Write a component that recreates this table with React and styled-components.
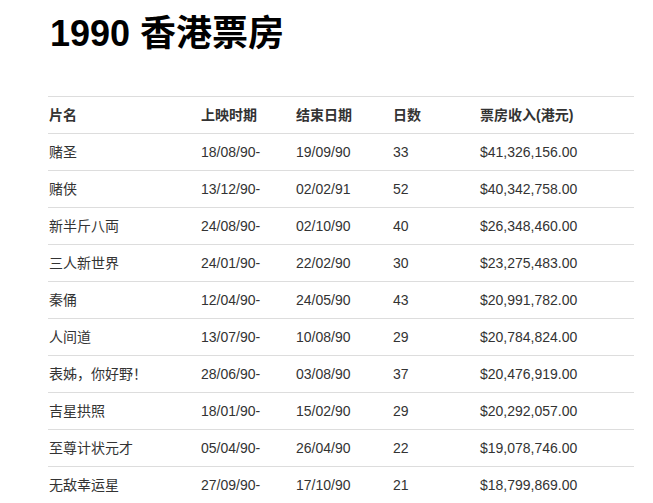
import React from "react";
import styled, { createGlobalStyle } from "styled-components";

const Global = createGlobalStyle`
  html, body { margin: 0; padding: 0; background: #fff; }
  body { font-family: "Liberation Sans", Arial, "Noto Sans CJK SC", sans-serif; color: #333; }
`;

const Page = styled.div`
  padding: 14px 0 0 48px;
`;

const Title = styled.h1`
  margin: 0 0 42px 2px;
  font-size: 36px;
  line-height: 40px;
  font-weight: 700;
  color: #000;
  font-family: "Liberation Sans", Arial, "Noto Sans CJK SC", sans-serif;
`;

const Table = styled.table`
  width: 586px;
  border-collapse: collapse;
  table-layout: fixed;
  font-size: 14px;
  border-top: 1px solid #ddd;
`;

const Th = styled.th`
  text-align: left;
  font-weight: 700;
  padding: 8px 1px;
  line-height: 20px;
  height: 36px;
  box-sizing: border-box;
  border-bottom: 1px solid #ddd;
  color: #333;
`;

const Td = styled.td`
  padding: 8px 1px;
  line-height: 20px;
  height: 37px;
  box-sizing: border-box;
  border-bottom: 1px solid #ddd;
  color: #333;
  white-space: nowrap;
`;

const widths = [152, 95, 97, 87, 155];
const headers = ["片名", "上映时期", "结束日期", "日数", "票房收入(港元)"];
const rows = [
  ["赌圣", "18/08/90-", "19/09/90", "33", "$41,326,156.00"],
  ["赌侠", "13/12/90-", "02/02/91", "52", "$40,342,758.00"],
  ["新半斤八両", "24/08/90-", "02/10/90", "40", "$26,348,460.00"],
  ["三人新世界", "24/01/90-", "22/02/90", "30", "$23,275,483.00"],
  ["秦俑", "12/04/90-", "24/05/90", "43", "$20,991,782.00"],
  ["人间道", "13/07/90-", "10/08/90", "29", "$20,784,824.00"],
  ["表姊，你好野！", "28/06/90-", "03/08/90", "37", "$20,476,919.00"],
  ["吉星拱照", "18/01/90-", "15/02/90", "29", "$20,292,057.00"],
  ["至尊计状元才", "05/04/90-", "26/04/90", "22", "$19,078,746.00"],
  ["无敌幸运星", "27/09/90-", "17/10/90", "21", "$18,799,869.00"],
];

export default function App() {
  return (
    <Page>
      <Global />
      <Title>1990 香港票房</Title>
      <Table>
        <colgroup>
          {widths.map((w, i) => (
            <col key={i} style={{ width: w }} />
          ))}
        </colgroup>
        <thead>
          <tr>
            {headers.map((h) => (
              <Th key={h}>{h}</Th>
            ))}
          </tr>
        </thead>
        <tbody>
          {rows.map((r, i) => (
            <tr key={i}>
              {r.map((c, j) => (
                <Td key={j}>{c}</Td>
              ))}
            </tr>
          ))}
        </tbody>
      </Table>
    </Page>
  );
}
